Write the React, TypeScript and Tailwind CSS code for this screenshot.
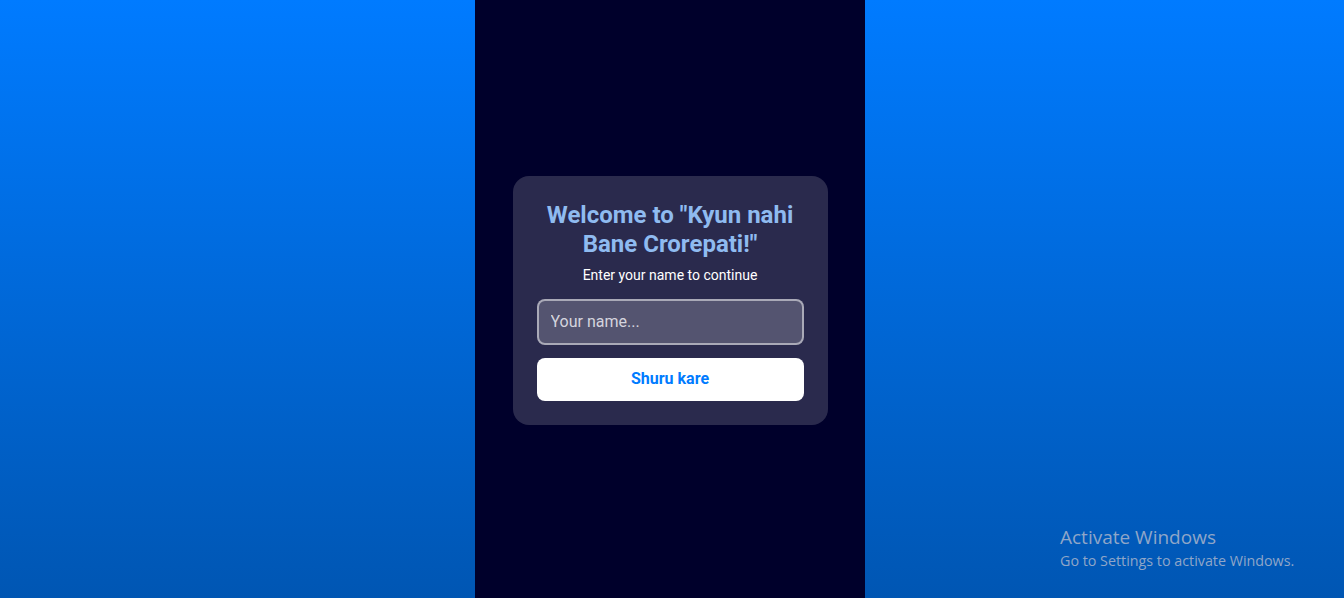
import React, { useState } from 'react';

const App: React.FC = () => {
  const [name, setName] = useState('');

  return (
    <div
      className="relative h-[598px] w-full overflow-hidden bg-gradient-to-b from-[#007bff] to-[#0056b3] flex justify-center pr-[4px]"
      style={{ fontFamily: 'Roboto, "Liberation Sans", sans-serif' }}
    >
      {/* Game column */}
      <div className="w-[390px] h-full bg-[#00002b] flex items-center justify-center pt-[2px]">
        <div className="w-[315px] bg-[#2a2a4d] rounded-2xl px-6 pt-[25px] pb-6 flex flex-col items-center">
          <h1 className="text-[24px] leading-[29px] font-bold text-[#8fbbf0] text-center">
            Welcome to "Kyun nahi Bane Crorepati!"
          </h1>
          <p className="mt-[6px] text-sm text-white text-center">Enter your name to continue</p>

          <input
            value={name}
            onChange={(e) => setName(e.target.value)}
            placeholder="Your name..."
            className="mt-[14px] w-full h-[46px] rounded-lg border-2 border-white/50 bg-white/20 px-3 text-base text-white placeholder:text-[#d4d4de] outline-none"
          />

          <button className="mt-[13px] w-full h-[43px] rounded-lg bg-white text-[#007bff] font-bold text-base">
            Shuru kare
          </button>
        </div>
      </div>

      {/* OS watermark overlay */}
      <div
        className="absolute left-[1060px] top-[525px] text-[#8fa6c8] pointer-events-none"
        style={{ fontFamily: '"Open Sans", "Noto Sans", sans-serif' }}
      >
        <div className="text-[19px] leading-[25px]">Activate Windows</div>
        <div className="text-[14.3px] leading-[20px] mt-[1px]">Go to Settings to activate Windows.</div>
      </div>
    </div>
  );
};

export default App;
